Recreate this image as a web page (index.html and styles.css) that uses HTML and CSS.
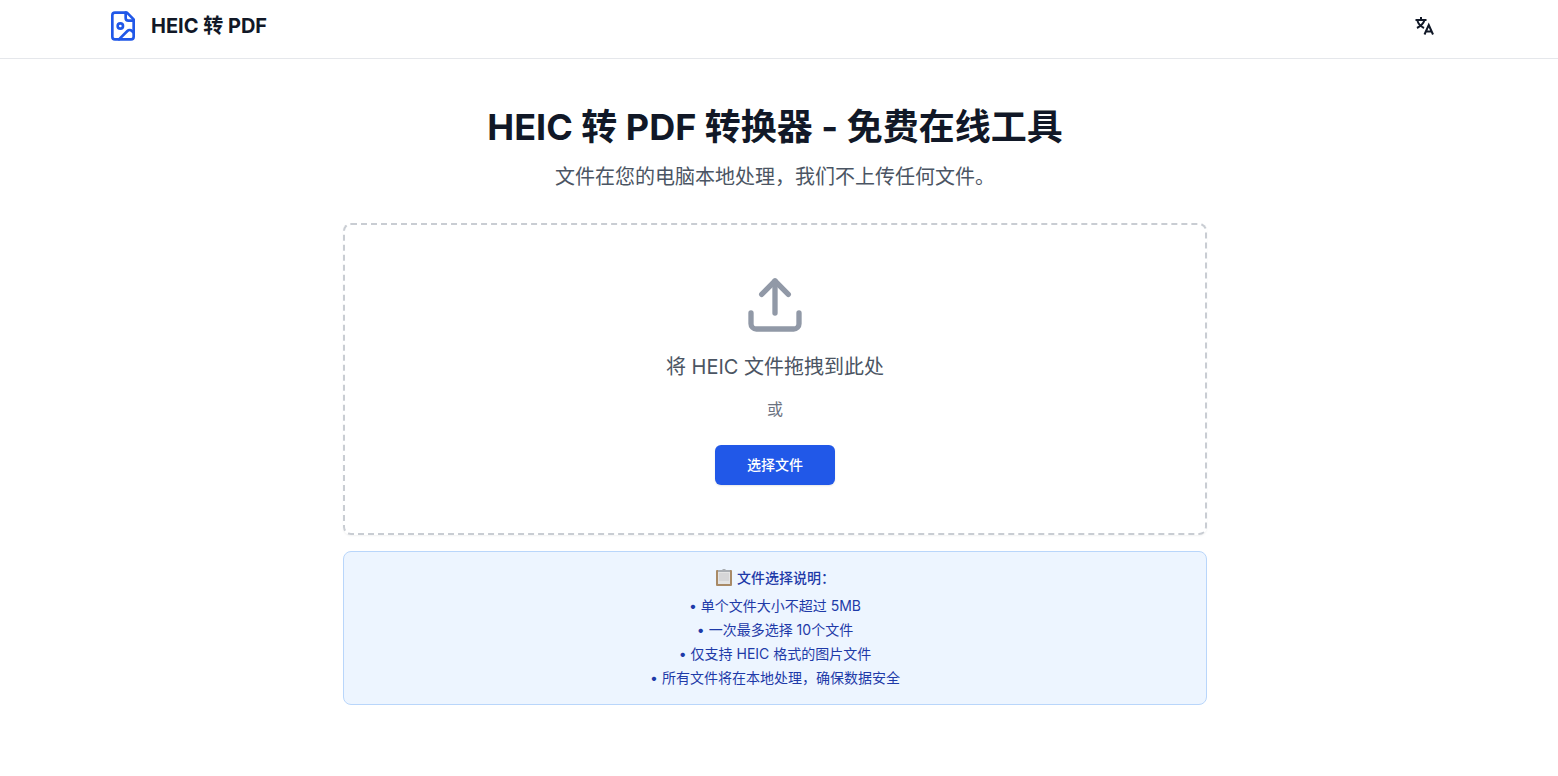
FILE: index.html
```html
<!DOCTYPE html>
<html lang="zh-CN">
<head>
    <meta charset="UTF-8">
    <meta name="viewport" content="width=device-width, initial-scale=1.0">
    <title>HEIC 转 PDF 转换器 - 免费在线工具</title>
    <link rel="stylesheet" href="styles.css">
</head>
<body>
    <header class="header">
        <div class="header-inner">
            <a href="#" class="logo">
                <svg class="logo-icon" viewBox="0 0 24 24" aria-hidden="true">
                    <path d="M15 2H6a2 2 0 0 0-2 2v16a2 2 0 0 0 2 2h12a2 2 0 0 0 2-2V7Z"/>
                    <path d="M14 2v4a2 2 0 0 0 2 2h4"/>
                    <circle cx="10" cy="12" r="2"/>
                    <path d="m20 17-1.296-1.296a2.41 2.41 0 0 0-3.408 0L9 22"/>
                </svg>
                <span>HEIC 转 PDF</span>
            </a>
            <button type="button" class="lang-button" aria-label="切换语言">
                <svg viewBox="0 0 20 20" aria-hidden="true">
                    <path d="M.5 4h11M6 1v3M2.500 5c1 3 3.500 5.500 6.500 7M9.500 4c-1 3.500-3.500 6-7.500 8"/>
                    <path d="M9.500 18.500l4.250-9.500L18 18.500M11 15.500h5.500"/>
                </svg>
            </button>
        </div>
    </header>

    <main class="container">
        <h1>HEIC 转 PDF 转换器 - 免费在线工具</h1>
        <p class="subtitle">文件在您的电脑本地处理，我们不上传任何文件。</p>

        <div class="dropzone">
            <svg class="upload-icon" viewBox="0 0 24 24" aria-hidden="true">
                <path d="M21 15v4a2 2 0 0 1-2 2H5a2 2 0 0 1-2-2v-4"/>
                <path d="M17 8l-5-5-5 5"/>
                <path d="M12 3v12"/>
            </svg>
            <p class="drop-text">将 HEIC 文件拖拽到此处</p>
            <p class="drop-or">或</p>
            <button type="button" class="button">选择文件</button>
        </div>

        <div class="notes">
            <h2>
                <svg class="clipboard" viewBox="0 0 18 18" aria-hidden="true">
                    <rect x="1" y="1" width="16" height="16" rx="1" fill="#a98a66"/>
                    <rect x="3" y="2" width="12" height="13" fill="#e4e4e4"/>
                    <path d="M4 5h10M4 7h10M4 9h10M4 11h10" stroke="#c8c8cb" stroke-width="1"/>
                    <path d="M3 3V1h4l1-1h2l1 1h4v2z" fill="#a9adb2"/>
                </svg>
                文件选择说明：
            </h2>
            <ul>
                <li>• 单个文件大小不超过 5MB</li>
                <li>• 一次最多选择 10个文件</li>
                <li>• 仅支持 HEIC 格式的图片文件</li>
                <li>• 所有文件将在本地处理，确保数据安全</li>
            </ul>
        </div>
    </main>
</body>
</html>
```

FILE: styles.css
```css
* {
    box-sizing: border-box;
    margin: 0;
    padding: 0;
}

body {
    font-family: Inter, "Noto Sans CJK SC", sans-serif;
    font-size: 16px;
    line-height: 24px;
    color: #111827;
    background-color: #fff;
}

.header {
    padding: 0 8px 6px 0;
    border-bottom: 1px solid #e5e7eb;
}

.header-inner {
    display: flex;
    align-items: center;
    justify-content: space-between;
    max-width: 1400px;
    height: 52px;
    margin: 0 auto;
    padding: 0 32px;
}

.logo {
    display: flex;
    align-items: center;
    gap: 12px;
    font-size: 20px;
    line-height: 28px;
    font-weight: 700;
    color: #111827;
    text-decoration: none;
}

.logo-icon,
.upload-icon,
.lang-button svg {
    fill: none;
    stroke: currentColor;
    stroke-width: 2;
    stroke-linecap: round;
    stroke-linejoin: round;
}

.logo-icon {
    width: 32px;
    height: 32px;
    color: #2158e8;
}

.lang-button {
    display: flex;
    align-items: center;
    justify-content: center;
    width: 36px;
    height: 36px;
    border: none;
    border-radius: 6px;
    background: none;
    color: #111827;
    cursor: pointer;
}

.lang-button svg {
    width: 20px;
    height: 20px;
    stroke-linecap: butt;
    stroke-linejoin: miter;
}

.container {
    max-width: 904px;
    margin: 0 auto;
    padding: 48px 24px 48px 16px;
    text-align: center;
}

h1 {
    margin-bottom: 16px;
    font-size: 36px;
    line-height: 40px;
    font-weight: 700;
}

.subtitle {
    margin-bottom: 32px;
    font-size: 20px;
    line-height: 28px;
    color: #4b5563;
}

.dropzone {
    display: flex;
    flex-direction: column;
    align-items: center;
    margin-bottom: 16px;
    padding: 48px;
    border: 2px dashed #c9cdd3;
    border-radius: 8px;
    box-shadow: 0 1px 2px rgba(0, 0, 0, 0.05);
}

.upload-icon {
    width: 64px;
    height: 64px;
    margin-bottom: 16px;
    color: #9199a7;
}

.drop-text {
    margin-bottom: 16px;
    font-size: 20px;
    line-height: 28px;
    color: #4b5563;
}

.drop-or {
    margin-bottom: 24px;
    color: #6b7280;
}

.button {
    height: 40px;
    padding: 0 32px;
    border: none;
    border-radius: 6px;
    background-color: #2158e8;
    box-shadow: 0 1px 2px rgba(0, 0, 0, 0.1);
    color: #fff;
    font-family: inherit;
    font-size: 14px;
    line-height: 20px;
    font-weight: 500;
    cursor: pointer;
}

.button:hover {
    background-color: #1d4ed8;
}

.notes {
    padding: 16px;
    border: 1px solid #b9d6fb;
    border-radius: 8px;
    background-color: #edf5ff;
    color: #1e3aa8;
    font-size: 14px;
    line-height: 20px;
}

.notes h2 {
    display: flex;
    align-items: center;
    justify-content: center;
    gap: 4px;
    margin-bottom: 8px;
    font-size: 14px;
    line-height: 20px;
    font-weight: 500;
}

.clipboard {
    width: 18px;
    height: 18px;
}

.notes ul {
    display: grid;
    gap: 4px;
    list-style: none;
}
```
